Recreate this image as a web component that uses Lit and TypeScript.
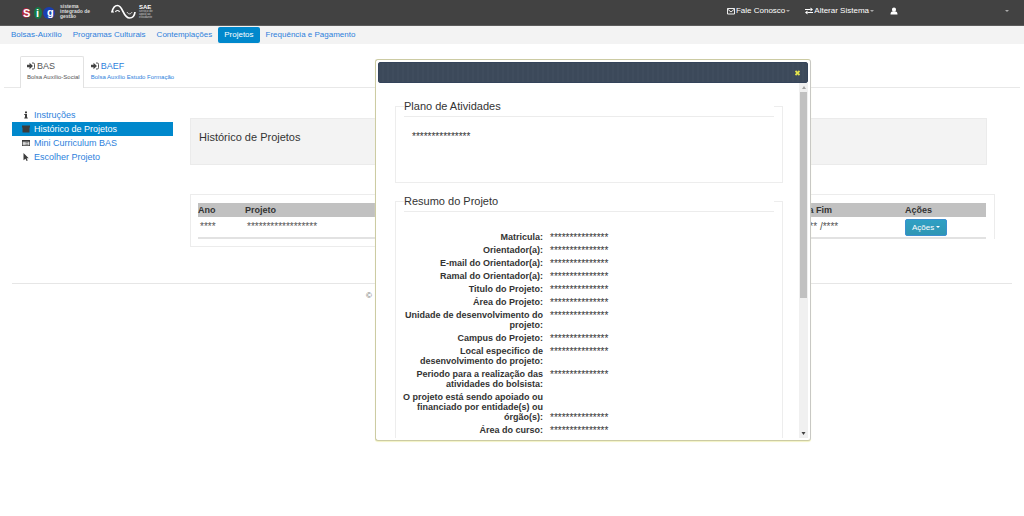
import { LitElement, html, css, svg } from "lit";
import { customElement } from "lit/decorators.js";
import { classMap } from "lit/directives/class-map.js";

const STARS = "*".repeat(15);

const icon = (body: unknown, w = 8, h = 8) =>
  html`<svg class="icon" width=${w} height=${h} viewBox="0 0 16 16" aria-hidden="true">${body}</svg>`;

const envelope = svg`<path d="M1 3h14v11H1zM1 4l7 6 7-6" fill="none" stroke="currentColor" stroke-width="1.8"/>`;
const exchange = svg`<path d="M0 5h11M5 11h11" stroke="currentColor" stroke-width="2"/><path d="M11 1l5 4-5 4zM5 7l-5 4 5 4z" fill="currentColor"/>`;
const user = svg`<path d="M8 1c2.500 0 4 1.800 4 4.200S10.500 10 8 10 4 7.600 4 5.200 5.500 1 8 1zM1 15c0-4 1.500-6 4-6 2 1.600 4 1.600 6 0 2.500 0 4 2 4 6z" fill="currentColor"/>`;
const signIn = svg`<path d="M0 5.500h5V1.500l7 6.500-7 6.500v-4H0z" fill="currentColor"/><path d="M10 2h2.500a2.500 2.500 0 0 1 2.500 2.500v7a2.500 2.500 0 0 1-2.500 2.500H10" fill="none" stroke="currentColor" stroke-width="1.800"/>`;
const info = svg`<path d="M6 1h4v3.500H6zM4.500 6H10v7h1.500v2h-7v-2H6V8H4.500z" fill="currentColor"/>`;
const archive = svg`<path d="M0 1h16v4H0zM1 5h14v10H1z" fill="currentColor"/>`;
const card = svg`<path d="M0 2h16v12H0z" fill="currentColor"/><path d="M1.500 5.500h13v7h-13z" fill="#fff"/><path d="M3 7.500h2M6.500 7.500H13M3 10.500h2M6.500 10.500H13" stroke="currentColor" stroke-width="1.500"/>`;
const pointer = svg`<path d="M3 0l10.500 10.500H9.300L11.500 15l-2.500 1-2-4.700L3 14.500z" fill="currentColor"/>`;

@customElement("record-dialog")
export class RecordDialog extends LitElement {
  static styles = css`
    :host { display: block; }
    .dialog {
      box-sizing: border-box;
      height: 382px;
      display: flex;
      flex-direction: column;
      padding: 2px;
      background: #fff;
      border: 1px solid #cccba3;
      border-right-color: #c8c8c4;
      border-radius: 3px;
      box-shadow: 0 1px 1px #f3f3c4;
      color: #333;
    }
    .bar {
      flex: none;
      box-sizing: border-box;
      height: 21px;
      display: flex;
      align-items: center;
      justify-content: flex-end;
      padding-right: 7px;
      border: 1px solid #34435a;
      border-radius: 2px;
      background: repeating-linear-gradient(90deg, #3c495a 0 3px, #3f4c5d 3px 5px);
    }
    .close {
      display: flex;
      padding: 0;
      border: 0;
      background: none;
      color: #e2e24c;
    }
    .view { flex: 1; min-height: 0; display: flex; }
    .body { flex: 1; overflow: hidden; padding: 13px 16px 0 17px; }
    fieldset {
      margin: 0 0 8px;
      padding: 0 8px;
      border: 1px solid #ededed;
      min-width: 0;
    }
    legend {
      box-sizing: border-box;
      width: 100%;
      padding: 0;
      font-size: 11px;
      line-height: 20px;
      background: #fff;
      border-bottom: 1px solid #ececec;
    }
    .plan { height: 50px; margin: 0; padding: 15px 8px 0; font-size: 10px; line-height: 10px; }
    .rows { margin: 0 0 0 -5px; padding: 20px 0 30px; display: grid; gap: 3px; }
    .row { display: grid; grid-template-columns: 144px 1fr; column-gap: 7px; }
    .row.end { align-items: end; }
    dt, dd { margin: 0; line-height: 10px; }
    dt { font-size: 9px; font-weight: bold; text-align: right; }
    dd { font-size: 10px; height: 10px; line-height: 12px; }
    .track {
      flex: none;
      width: 9px;
      display: grid;
      grid-template-rows: 9px 1fr 9px;
      background: #f0f0f0;
    }
    .cap { display: flex; align-items: center; justify-content: center; }
    .thumb { height: 61%; margin: 0 1px; background: #c1c1c1; }
    .up { color: #a3a3a3; }
    .down { color: #404040; }
  `;

  private fields: [string, boolean?][] = [
    ["Matricula:"],
    ["Orientador(a):"],
    ["E-mail do Orientador(a):"],
    ["Ramal do Orientador(a):"],
    ["Titulo do Projeto:"],
    ["Área do Projeto:"],
    ["Unidade de desenvolvimento do projeto:"],
    ["Campus do Projeto:"],
    ["Local especifico de desenvolvimento do projeto:"],
    ["Periodo para a realização das atividades do bolsista:"],
    ["O projeto está sendo apoiado ou financiado por entidade(s) ou órgão(s):", true],
    ["Área do curso:"],
  ];

  render() {
    return html`
      <section class="dialog" role="dialog" aria-label="Projeto">
        <header class="bar">
          <button class="close" type="button" aria-label="Fechar">
            <svg width="5" height="6" viewBox="0 0 10 12"><path d="M1 2l8 8M9 2l-8 8" stroke="currentColor" stroke-width="3.600" /></svg>
          </button>
        </header>
        <div class="view">
          <div class="body">
            <fieldset>
              <legend>Plano de Atividades</legend>
              <p class="plan">${STARS}</p>
            </fieldset>
            <fieldset>
              <legend>Resumo do Projeto</legend>
              <dl class="rows">
                ${this.fields.map(
                  ([label, end]) => html`<div class=${classMap({ row: true, end: !!end })}>
                    <dt>${label}</dt><dd>${STARS}</dd>
                  </div>`
                )}
              </dl>
            </fieldset>
          </div>
          <div class="track" aria-hidden="true">
            <span class="cap up"><svg width="4" height="3" viewBox="0 0 4 3"><path d="M0 3l2-3 2 3z" fill="currentColor" /></svg></span>
            <div class="thumb"></div>
            <span class="cap down"><svg width="5" height="3" viewBox="0 0 4 3"><path d="M0 0l2 3 2-3z" fill="currentColor" /></svg></span>
          </div>
        </div>
      </section>
    `;
  }
}

@customElement("app-root")
export class AppRoot extends LitElement {
  static styles = css`
    :host {
      display: block;
      position: relative;
      min-height: 100vh;
      background: #fff;
      color: #333;
      font-family: "Liberation Sans", Arial, sans-serif;
      font-size: 9px;
      line-height: 14px;
    }
    a { color: #2d7fdc; text-decoration: none; }
    .icon { flex: none; }
    .caret {
      width: 0;
      border: 2px solid transparent;
      border-top-color: currentColor;
      border-bottom: 0;
    }
    .top {
      box-sizing: border-box;
      height: 26px;
      display: flex;
      align-items: flex-start;
      padding: 0 15px 0 21px;
      background: #424242;
      border-bottom: 1px solid #5c5c5c;
      color: #fff;
    }
    .brand { display: flex; align-items: center; height: 23px; }
    .brand svg { display: block; }
    .word { font-size: 11px; font-weight: bold; fill: #fff; }
    .claim { margin-left: 4px; font-size: 5px; font-weight: bold; line-height: 5px; color: #ddd; }
    .sae { margin-left: 21px; gap: 3px; }
    .saeText { font-size: 3px; line-height: 3px; color: #ccc; }
    .saeText strong { display: block; font-size: 6px; line-height: 6px; color: #fff; }
    .tools { margin-left: auto; display: flex; align-items: center; height: 22px; font-size: 8px; }
    .tool { display: flex; align-items: center; gap: 1px; color: #fff; }
    .tool .caret { color: #aaa; border-width: 2px 2px 0; }
    .tool.system { margin-left: 15px; }
    .tool.user { margin-left: 16px; gap: 107px; }
    .nav {
      display: flex;
      align-items: center;
      gap: 1px;
      height: 18px;
      padding: 0 6px;
      background: #f3f3f3;
      font-size: 8px;
    }
    .nav a { padding: 0 5px; line-height: 16px; border-radius: 2px; }
    .nav a.on { padding: 0 6px; background: #0088cc; color: #fff; }
    .tabs {
      display: flex;
      margin: 12px 4px 0;
      padding-left: 16px;
      border-bottom: 1px solid #e8e8e8;
    }
    .tab {
      box-sizing: border-box;
      height: 31px;
      padding: 2px 3px 0 6px;
      border: 1px solid transparent;
      border-bottom: 0;
      border-radius: 2px 2px 0 0;
    }
    .tab.on { background: #fff; border-color: #e2e2e2; color: #555; height: 32px; margin-bottom: -1px; }
    .tabName { display: flex; align-items: center; gap: 2px; line-height: 14px; }
    .tabName .icon { color: #444; }
    .tabNote { display: block; font-size: 6px; line-height: 8px; white-space: nowrap; }
    .page { display: grid; grid-template-columns: 161px 1fr; column-gap: 17px; margin: 20px 12px 0; }
    .menu { list-style: none; margin: 0; padding: 0; }
    .menu a { display: grid; grid-template-columns: 8px 1fr; column-gap: 4px; align-items: center; padding-left: 10px; }
    .menu .icon { color: #3c3c3c; }
    .menu a.on { background: #0088cc; color: #fff; }
    .content { padding-top: 10px; min-width: 0; }
    h1 {
      box-sizing: border-box;
      height: 47px;
      margin: 0 25px 29px 0;
      padding: 11px 8px;
      font-size: 11px;
      font-weight: normal;
      background: #f3f3f3;
      border: 1px solid #ebebeb;
    }
    .panel { margin-right: 17px; padding: 8px 8px 0 7px; border: 1px solid #ececec; border-bottom: 0; }
    .foot { box-sizing: border-box; width: 40%; height: 8px; border: 1px solid #ececec; border-width: 0 0 1px 1px; }
    table { width: 100%; table-layout: fixed; border-collapse: collapse; }
    th { height: 14px; padding: 0; text-align: left; background: #c1c1c1; }
    td { height: 20px; padding: 0 2px; border-bottom: 2px solid #e2e2e2; font-size: 10px; line-height: 18px; color: #555; }
    td.act { padding: 0; }
    .year { width: 47px; }
    .start { width: 18%; }
    .finish { width: 111px; }
    .acts { width: 81px; }
    .menuButton {
      display: flex;
      align-items: center;
      gap: 2px;
      height: 17px;
      padding: 0 6px;
      border: 1px solid #3b8fd0;
      border-radius: 2px;
      background: linear-gradient(#2fa0c4, #2f96b4);
      color: #fff;
      font: 8px "Liberation Sans", Arial, sans-serif;
    }
    footer { margin: 36px 12px 0; padding-top: 5px; border-top: 1px solid #e6e6e6; font-size: 8px; color: #666; }
    footer span { margin-left: 354px; }
    .over { position: absolute; left: 375px; top: 59px; width: 436px; }
  `;

  private nav = ["Bolsas-Auxílio", "Programas Culturais", "Contemplações", "Projetos", "Frequência e Pagamento"];
  private menu: [string, unknown][] = [
    ["Instruções", info],
    ["Histórico de Projetos", archive],
    ["Mini Curriculum BAS", card],
    ["Escolher Projeto", pointer],
  ];

  render() {
    return html`
      <header class="top">
        <div class="brand">
          <svg width="35" height="20" viewBox="0 0 35 20" role="img" aria-label="sig">
            <ellipse cx="5" cy="11" rx="4" ry="5" fill="#b3263c" />
            <ellipse cx="17" cy="11" rx="4" ry="6" fill="#177a45" />
            <ellipse cx="28" cy="11" rx="6" ry="6" fill="#1b3fb0" />
            <text class="word" x="2" y="15">S</text>
            <text class="word" x="15" y="15">i</text>
            <text class="word" x="26" y="14">g</text>
          </svg>
          <div class="claim">sistema<br />integrado de<br />gestão</div>
        </div>
        <div class="brand sae">
          <svg width="25" height="16" viewBox="0 0 25 16" aria-hidden="true">
            <path d="M1 8C2 3.500 4 1.500 6.500 1.500c5.500 0 5.500 12.500 12 12.500 3 0 5-2 5.500-6" fill="none" stroke="#fff" stroke-width="1.700" />
            <path d="M0 8h3M4.500 8C5 6 8 6 8.500 8" fill="none" stroke="#fff" stroke-width="1.200" />
            <path d="M16 8c1 2.500 4 2.500 5 0" fill="none" stroke="#ddd" stroke-width="1" />
          </svg>
          <div class="saeText"><strong>SAE</strong>serviço de<br />apoio ao<br />estudante</div>
        </div>
        <nav class="tools">
          <a class="tool" href="#">${icon(envelope)}Fale Conosco<span class="caret"></span></a>
          <a class="tool system" href="#">${icon(exchange)}Alterar Sistema<span class="caret"></span></a>
          <a class="tool user" href="#" aria-label="Usuário">${icon(user)}<span class="caret"></span></a>
        </nav>
      </header>
      <nav class="nav">
        ${this.nav.map((n) => html`<a href="#" class=${classMap({ on: n === "Projetos" })}>${n}</a>`)}
      </nav>
      <nav class="tabs">
        <a class="tab on" href="#"><span class="tabName">${icon(signIn)}BAS</span><span class="tabNote">Bolsa Auxílio-Social</span></a>
        <a class="tab" href="#"><span class="tabName">${icon(signIn)}BAEF</span><span class="tabNote">Bolsa Auxílio Estudo Formação</span></a>
      </nav>
      <main class="page">
        <ul class="menu">
          ${this.menu.map(
            ([label, glyph], i) => html`<li><a href="#" class=${classMap({ on: i === 1 })}>${icon(glyph)}${label}</a></li>`
          )}
        </ul>
        <div class="content">
          <h1>Histórico de Projetos</h1>
          <div class="panel">
            <table>
              <thead>
                <tr>
                  <th class="year">Ano</th>
                  <th>Projeto</th>
                  <th class="start"></th>
                  <th class="finish">Data Fim</th>
                  <th class="acts">Ações</th>
                </tr>
              </thead>
              <tbody>
                <tr>
                  <td>****</td>
                  <td>******************</td>
                  <td></td>
                  <td>** /** /****</td>
                  <td class="act"><button class="menuButton" type="button">Ações<span class="caret"></span></button></td>
                </tr>
              </tbody>
            </table>
          </div>
          <div class="foot"></div>
        </div>
      </main>
      <footer><span>©</span></footer>
      <record-dialog class="over"></record-dialog>
    `;
  }
}
